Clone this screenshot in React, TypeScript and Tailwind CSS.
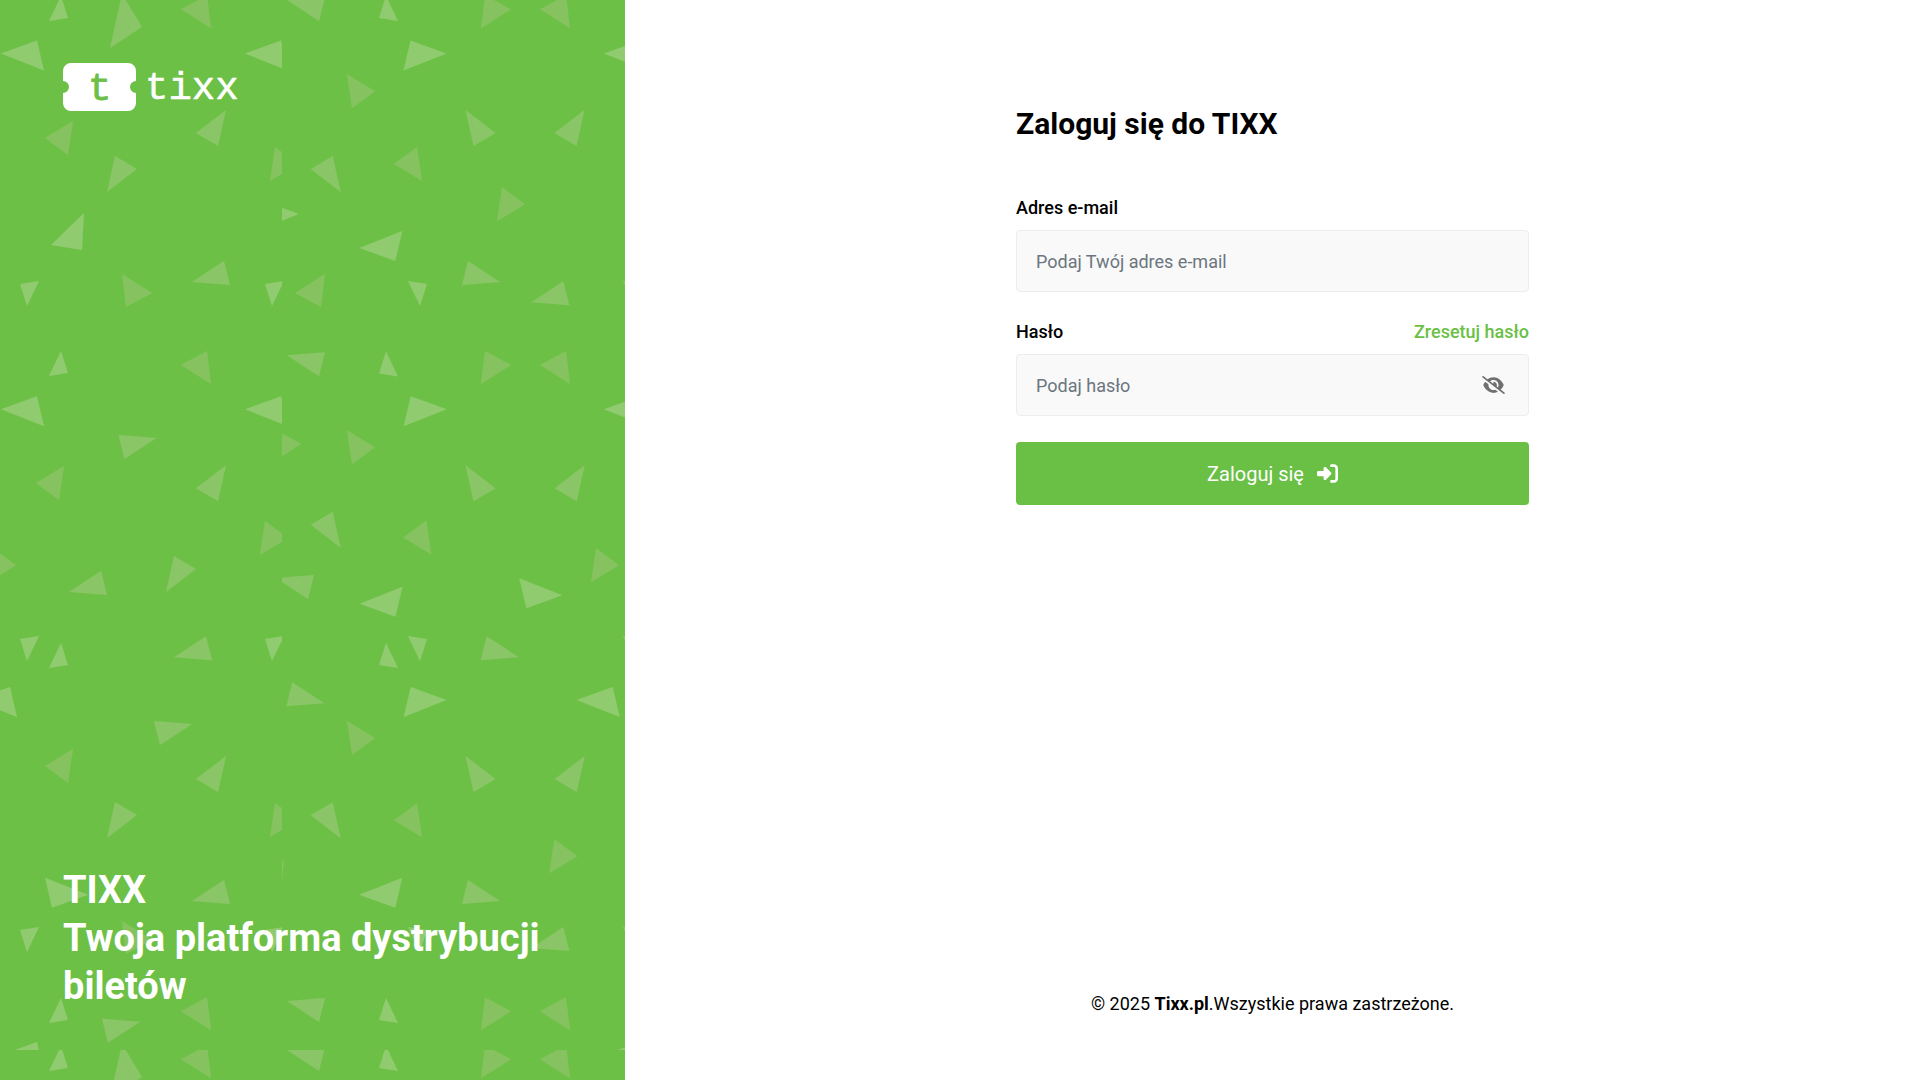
import { useState } from 'react';
import { FaEye, FaEyeSlash, FaRightToBracket } from 'react-icons/fa6';

type Kind = 'arrow' | 'dart' | 'wedge' | 'flag' | 'spike' | 'fin';

// [kind, tip x, tip y, mirror x, mirror y]
type Piece = [Kind, number, number, 1 | -1, 1 | -1];

const SHAPES: Record<Kind, { points: string; fill: string }> = {
    arrow: { points: '0,0 36,-13 43,17', fill: '#90cb70' },
    dart: { points: '0,0 30,-23 22,13', fill: '#8ac567' },
    wedge: { points: '0,0 28,-17 23,17', fill: '#86c360' },
    flag: { points: '0,0 26,-14 30,19', fill: '#86c360' },
    spike: { points: '0,0 -7,-22 12,-25', fill: '#90cb70' },
    fin: { points: '0,0 32,-21 38,3', fill: '#8ac567' },
};

const LEFT_PIECES: Piece[] = [
    ['spike', 61, -4, -1, -1],
    ['flag', 181, 9.3, 1, 1],
    ['arrow', 1, 53.6, 1, 1],
    ['arrow', 245, 53.6, 1, 1],
    ['dart', 196, 133, 1, 1],
    ['wedge', 45, 138, 1, 1],
    ['dart', 137, 169, -1, -1],
    ['wedge', 298, 164, -1, -1],
    ['fin', 192, 282, 1, 1],
    ['flag', 152, 293, -1, -1],
    ['spike', 27, 306, 1, 1],
    ['spike', 272, 306, 1, 1],
    ['spike', 61, 351, -1, -1],
    ['flag', 181, 365, 1, 1],
    ['arrow', 1, 409.3, 1, 1],
    ['arrow', 245, 409.3, 1, 1],
    ['fin', 156.5, 438, -1, -1],
    ['wedge', 36, 483, 1, 1],
    ['dart', 196, 488.3, 1, 1],
    ['wedge', 288, 538, -1, -1],
    ['wedge', 16, 565.3, -1, -1],
    ['dart', 196, 569, -1, -1],
    ['fin', 69, 592, 1, 1],
    ['spike', 61, 643, -1, -1],
    ['fin', 174, 657.3, 1, 1],
    ['spike', 27, 661, 1, 1],
    ['spike', 272, 661, 1, 1],
    ['arrow', -26, 700, 1, 1],
    ['fin', 192, 724, -1, -1],
    ['wedge', 45, 766, 1, 1],
    ['dart', 196, 779, 1, 1],
    ['dart', 137, 815, -1, -1],
    ['wedge', 298, 820, -1, -1],
    ['arrow', 88, 894.7, -1, -1],
    ['fin', 192, 901, 1, 1],
    ['flag', 152, 940, -1, -1],
    ['spike', 27, 952, 1, 1],
    ['spike', 272, 952, 1, 1],
    ['spike', 61, 998, -1, -1],
    ['flag', 181, 1011.3, 1, 1],
    ['fin', 140, 1021.7, -1, -1],
    ['arrow', 1, 1055, 1, 1],
];

const RIGHT_PIECES: Piece[] = [
    ['fin', 287, 0, 1, -1],
    ['spike', 386, -4, 1, -1],
    ['flag', 511, 9.3, -1, 1],
    ['flag', 540, 9.3, 1, 1],
    ['arrow', 446.5, 53.6, -1, 1],
    ['arrow', 604, 53.6, 1, 1],
    ['wedge', 375, 91.3, -1, 1],
    ['dart', 495.5, 133, -1, 1],
    ['dart', 554.5, 133, 1, 1],
    ['wedge', 394, 164, 1, -1],
    ['dart', 310.7, 169, 1, -1],
    ['wedge', 525, 204.3, -1, -1],
    ['arrow', 299, 214, -1, 1],
    ['arrow', 359.3, 248, 1, -1],
    ['fin', 500, 282, -1, 1],
    ['flag', 295, 293, 1, -1],
    ['fin', 531.3, 302.3, 1, 1],
    ['spike', 420, 306, -1, 1],
    ['spike', 635, 306, -1, 1],
    ['spike', 386, 351.5, 1, -1],
    ['fin', 287, 355.3, 1, -1],
    ['flag', 511, 365, -1, 1],
    ['flag', 540, 365, 1, 1],
    ['arrow', 446.7, 409.3, -1, 1],
    ['arrow', 604, 409.3, 1, 1],
    ['flag', 301.3, 444, -1, 1],
    ['wedge', 375, 447.3, -1, 1],
    ['dart', 495.5, 488.3, -1, 1],
    ['dart', 554.7, 488.3, 1, 1],
    ['dart', 310.7, 524.7, 1, -1],
    ['wedge', 403.3, 537.5, 1, -1],
    ['wedge', 619, 565.3, -1, -1],
    ['fin', 276, 578, 1, -1],
    ['arrow', 562.3, 595.3, -1, -1],
    ['arrow', 359.5, 603.7, 1, -1],
    ['spike', 386, 643, 1, -1],
    ['fin', 518.7, 657.3, -1, 1],
    ['spike', 420, 661, -1, 1],
    ['spike', 635, 661, -1, 1],
    ['arrow', 446.7, 700, -1, 1],
    ['arrow', 576.7, 700, 1, 1],
    ['fin', 324.3, 703.3, -1, 1],
    ['wedge', 375, 738, -1, 1],
    ['dart', 495.5, 779, -1, 1],
    ['dart', 554.7, 779, 1, 1],
    ['dart', 310.7, 815.3, 1, -1],
    ['wedge', 394, 820.3, 1, -1],
    ['wedge', 577.3, 856.3, -1, -1],
    ['arrow', 359.3, 894.7, 1, -1],
    ['fin', 500, 901, -1, 1],
    ['fin', 531.3, 948, 1, 1],
    ['spike', 420, 952, -1, 1],
    ['spike', 635, 952, -1, 1],
    ['spike', 386, 998, 1, -1],
    ['fin', 287, 1001, 1, -1],
    ['flag', 511, 1011.3, -1, 1],
    ['flag', 540, 1011.3, 1, 1],
    ['arrow', 604, 1055, 1, 1],
];

function Pieces({ items }: { items: Piece[] }) {
    return (
        <>
            {items.map(([kind, x, y, sx, sy], index) => (
                <polygon
                    key={index}
                    points={SHAPES[kind].points}
                    fill={SHAPES[kind].fill}
                    transform={`translate(${x} ${y}) scale(${sx} ${sy})`}
                />
            ))}
        </>
    );
}

function Confetti() {
    return (
        <svg className="absolute inset-0 size-full" aria-hidden="true">
            <defs>
                <clipPath id="confetti-left">
                    <rect width="282" height="1050" />
                </clipPath>
                <clipPath id="confetti-right">
                    <rect x="282" width="366" height="1050" />
                </clipPath>
                <pattern id="confetti" width="648" height="1050" patternUnits="userSpaceOnUse">
                    <g clipPath="url(#confetti-left)">
                        <polygon points="122,-6 142,27 110,48" fill="#8ac567" />
                        <polygon points="84,213 51,245 82,250" fill="#90cb70" />
                        <Pieces items={LEFT_PIECES} />
                    </g>
                    <g clipPath="url(#confetti-right)">
                        <polygon points="282,862 284,860 282,882" fill="#86c360" />
                        <Pieces items={RIGHT_PIECES} />
                    </g>
                </pattern>
            </defs>
            <rect width="100%" height="100%" fill="url(#confetti)" />
        </svg>
    );
}

function Logo() {
    return (
        <svg width="180" height="48" viewBox="0 0 180 48" role="img" aria-label="tixx">
            <path
                d="M8 0H65a8 8 0 0 1 8 8V18a6 6 0 0 0 0 12V40a8 8 0 0 1-8 8H8a8 8 0 0 1-8-8V30a6 6 0 0 0 0-12V8a8 8 0 0 1 8-8Z"
                fill="#fff"
            />
            <g fontFamily="'Liberation Mono', monospace" fontSize="39" strokeLinejoin="round">
                <text x="25" y="37" fill="#6dc046" stroke="#6dc046" strokeWidth="0.8">
                    t
                </text>
                <text x="82" y="36" fill="#fff" stroke="#fff" strokeWidth="0.5">
                    tixx
                </text>
            </g>
        </svg>
    );
}

const inputClass =
    'h-[62px] w-full rounded-[4px] border border-[#ededed] bg-[#f9f9f9] px-[19px] text-[18px] text-black outline-none placeholder:text-[#6c757d] focus:border-[#6ac045]';

export default function App() {
    const [showPassword, setShowPassword] = useState(false);

    return (
        <div className="grid min-h-screen grid-cols-[125fr_259fr] bg-white font-['Roboto',sans-serif] text-black">
            {/* Brand panel */}
            <aside className="relative overflow-hidden bg-[#6dc046]">
                <Confetti />
                <div className="relative flex h-full flex-col justify-between px-[63px] pt-[63px] pb-[70px]">
                    <a href="#" className="self-start">
                        <Logo />
                    </a>
                    <h2 className="text-[38px] leading-[48px] font-bold text-white">
                        TIXX
                        <br />
                        Twoja platforma dystrybucji biletów
                    </h2>
                </div>
            </aside>

            {/* Login form */}
            <main className="flex flex-col items-center justify-between px-6 pt-[106px] pb-[63px]">
                <form className="w-full max-w-[513px]" onSubmit={(e) => e.preventDefault()}>
                    <h1 className="mb-[52px] text-[30px] leading-[36px] font-bold">Zaloguj się do TIXX</h1>

                    <div className="mb-[26px] flex flex-col gap-[9px]">
                        <label htmlFor="email" className="text-[18px] leading-[27px] font-medium">
                            Adres e-mail
                        </label>
                        <input id="email" type="email" placeholder="Podaj Twój adres e-mail" className={inputClass} />
                    </div>

                    <div className="mb-[26px] flex flex-col gap-[9px]">
                        <div className="flex justify-between text-[18px] leading-[27px] font-medium">
                            <label htmlFor="password">Hasło</label>
                            <a href="#" className="text-[#6ac045]">
                                Zresetuj hasło
                            </a>
                        </div>
                        <div className="relative">
                            <input
                                id="password"
                                type={showPassword ? 'text' : 'password'}
                                placeholder="Podaj hasło"
                                className={inputClass}
                            />
                            <button
                                type="button"
                                onClick={() => setShowPassword(!showPassword)}
                                className="absolute inset-y-0 right-6 flex items-center text-[#6f6f6f]"
                                aria-label={showPassword ? 'Ukryj hasło' : 'Pokaż hasło'}
                            >
                                {showPassword ? (
                                    <FaEye className="h-[18px] w-[23px]" />
                                ) : (
                                    <FaEyeSlash className="h-[18px] w-[23px]" />
                                )}
                            </button>
                        </div>
                    </div>

                    <button
                        type="submit"
                        className="flex h-[63px] w-full items-center justify-center gap-[13px] rounded-[4px] bg-[#6ac045] text-[20px] text-white"
                    >
                        Zaloguj się
                        <FaRightToBracket className="size-[21px]" />
                    </button>
                </form>

                <footer className="text-[18px] leading-[27px]">
                    © 2025 <strong className="font-bold">Tixx.pl</strong>.Wszystkie prawa zastrzeżone.
                </footer>
            </main>
        </div>
    );
}
